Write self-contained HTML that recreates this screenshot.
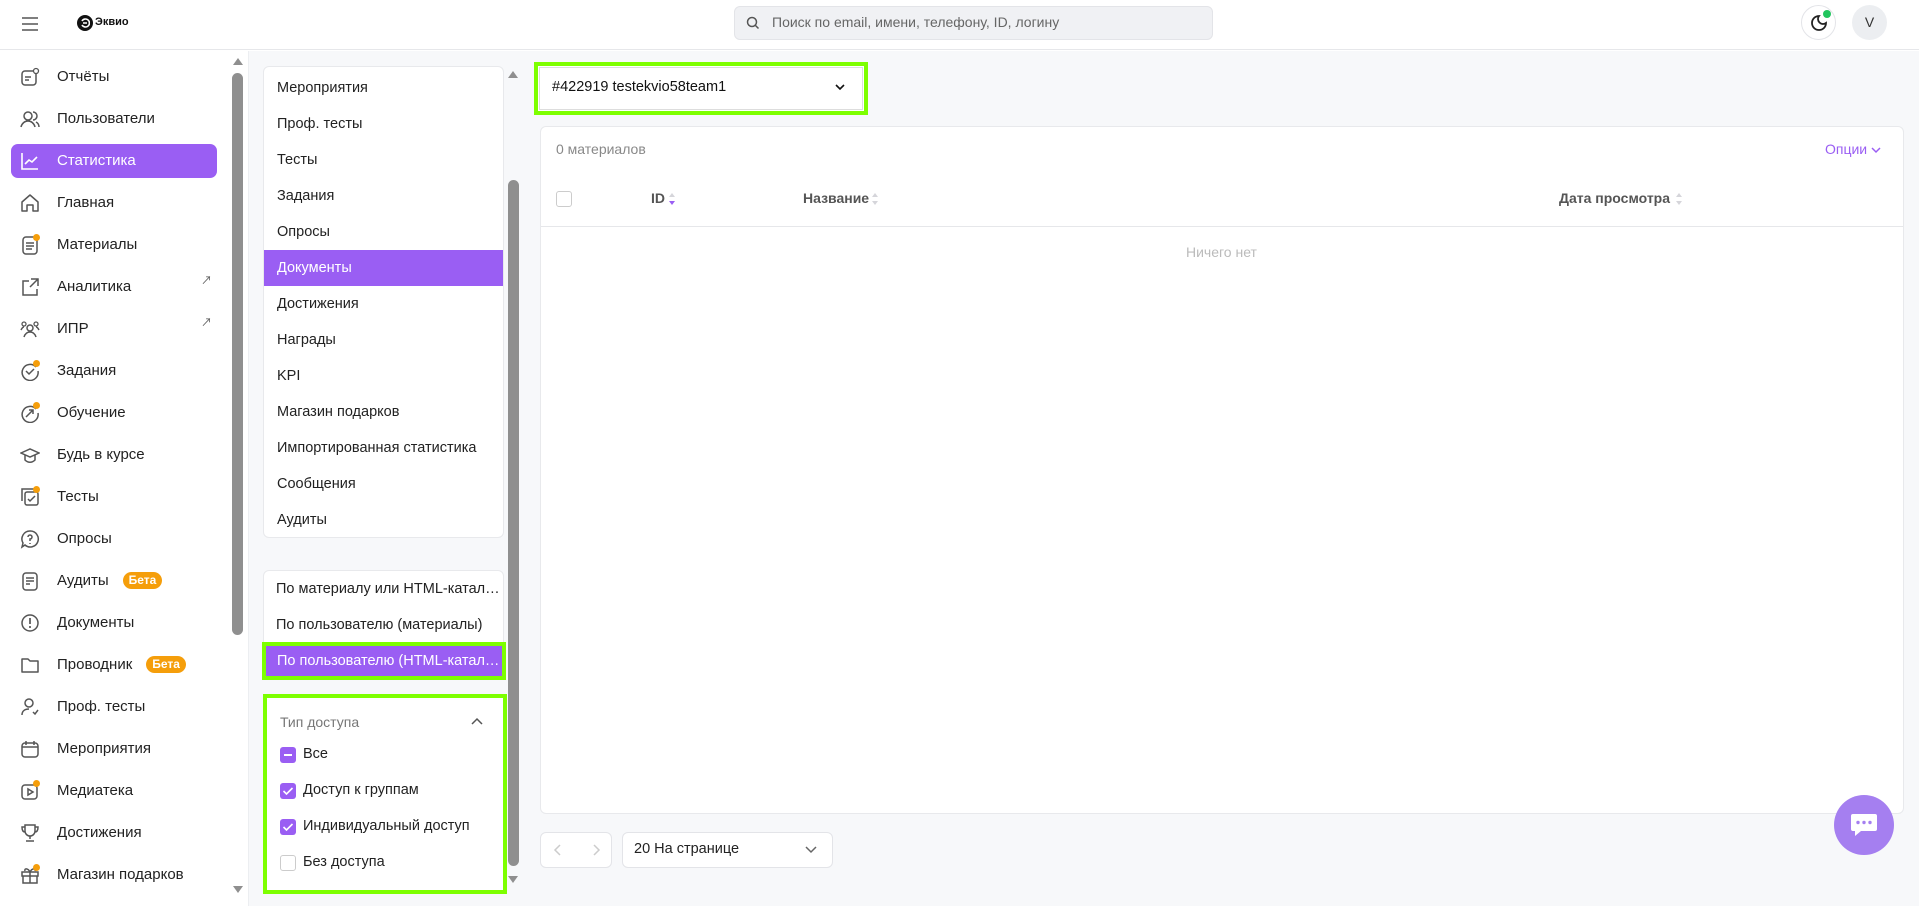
<!DOCTYPE html>
<html><head><meta charset="utf-8"><style>
*{box-sizing:border-box;margin:0;padding:0}
body{width:1919px;height:906px;overflow:hidden;background:#fff;font-family:"Liberation Sans","Noto Sans CJK SC",sans-serif;color:#222;position:relative}
.abs{position:absolute}
.hdr{left:0;top:0;width:1919px;height:50px;border-bottom:1px solid #e6e7ea;background:#fff}
.nav{left:0;top:50px;width:230px;height:856px}
.ni{position:absolute;left:11px;width:206px;height:34px;border-radius:7px;font-size:15px;line-height:34px;padding-left:46px;color:#222}
.ni svg{position:absolute;left:9px;top:7px}
.ni.act{background:#9a5ef3;color:#fff}
.beta{display:inline-block;background:#f59e0b;color:#fff;font-size:12px;font-weight:bold;line-height:17px;padding:0 6px;border-radius:9px;margin-left:14px;vertical-align:1px}
.dot{position:absolute;width:7px;height:7px;border-radius:50%;background:#f59e0b}
.sb{background:#8f8f8f;border-radius:6px}
.card{background:#fff;border:1px solid #e8e9ec;border-radius:6px}
.si{position:absolute;left:0;width:239px;height:36px;line-height:36px;padding-left:13px;font-size:14.5px;color:#222;white-space:nowrap;overflow:hidden}
.si.act{background:#9a5ef3;color:#fff}
.cb{position:absolute;width:16px;height:16px;border-radius:3px;background:#9a5ef3}
.cl{position:absolute;left:303px;font-size:14.5px;color:#222}
.th{position:absolute;top:190px;font-size:14px;color:#555;font-weight:bold}
</style></head><body>
<div class="abs hdr">
 <svg class="abs" style="left:20px;top:16px" width="20" height="16"><path d="M2 2h16M2 8h16M2 14h16" stroke="#555" stroke-width="1.6"/></svg>
 <div class="abs" style="left:77px;top:15px;width:16px;height:16px;border-radius:50%;background:#111"></div>
 <svg class="abs" style="left:80px;top:18px" width="10" height="10"><path d="M2 3a4 4 0 1 1 0 4M3 5h4" stroke="#fff" stroke-width="1.6" fill="none"/></svg>
 <div class="abs" style="left:95px;top:16px;font-size:11px;font-weight:bold;color:#111">Эквио</div>
 <div class="abs" style="left:734px;top:6px;width:479px;height:34px;background:#f0f1f4;border:1px solid #e3e4e8;border-radius:6px"></div>
 <svg class="abs" style="left:746px;top:16px" width="14" height="14"><circle cx="6" cy="6" r="4.5" stroke="#555" stroke-width="1.5" fill="none"/><path d="M9.5 9.5l3 3" stroke="#555" stroke-width="1.5"/></svg>
 <div class="abs" style="left:772px;top:14px;font-size:14px;color:#666">Поиск по email, имени, телефону, ID, логину</div>
 <div class="abs" style="left:1801px;top:5px;width:35px;height:35px;border-radius:50%;border:1px solid #e3e4e8;background:#fff"></div>
 <svg class="abs" style="left:1809px;top:13px" width="20" height="20"><path d="M10 3a7 7 0 1 0 7 7a5 5 0 0 1-7-7z" stroke="#222" stroke-width="1.8" fill="none"/></svg>
 <div class="abs" style="left:1823px;top:10px;width:8px;height:8px;border-radius:50%;background:#22c55e"></div>
 <div class="abs" style="left:1852px;top:5px;width:35px;height:35px;border-radius:50%;background:#eceef1;text-align:center;line-height:35px;font-size:14px;color:#333">V</div>
</div>

<div class="abs nav">
 <div class="ni" style="top:10px"><svg width="20" height="20"><rect x="2" y="4" width="14" height="14" rx="3" stroke="#555" stroke-width="1.5" fill="none"/><path d="M5 10h6M5 13h4" stroke="#555" stroke-width="1.5"/><circle cx="16" cy="4" r="2.5" stroke="#555" stroke-width="1.3" fill="#fff"/></svg>Отчёты</div>
 <div class="ni" style="top:52px"><svg width="20" height="20"><circle cx="8" cy="7" r="4" stroke="#555" stroke-width="1.5" fill="none"/><path d="M1 18c1-4 4-6 7-6s6 2 7 6M13 3a4 4 0 0 1 0 8M16 13c2 1 3 3 3 5" stroke="#555" stroke-width="1.5" fill="none"/></svg>Пользователи</div>
 <div class="ni act" style="top:94px"><svg width="20" height="20"><path d="M2 2v16h16M5 13l4-4 3 2 5-5" stroke="#fff" stroke-width="1.6" fill="none"/></svg>Статистика</div>
 <div class="ni" style="top:136px"><svg width="20" height="20"><path d="M2 18V9l8-7 8 7v9h-5v-6h-6v6z" stroke="#555" stroke-width="1.5" fill="none" stroke-linejoin="round"/></svg>Главная</div>
 <div class="ni" style="top:178px"><svg width="20" height="20"><rect x="3" y="2" width="14" height="17" rx="3" stroke="#555" stroke-width="1.5" fill="none"/><path d="M6 8h8M6 11h8M6 14h6" stroke="#555" stroke-width="1.5"/></svg><span class="dot" style="left:22px;top:6px"></span>Материалы</div>
 <div class="ni" style="top:220px"><svg width="20" height="20"><path d="M9 4H3v14h14v-6M11 2h7v7M18 2l-8 8" stroke="#555" stroke-width="1.5" fill="none"/></svg>Аналитика<span class="abs" style="left:190px;top:-6px;font-size:11px;color:#555">↗</span></div>
 <div class="ni" style="top:262px"><svg width="20" height="20"><circle cx="10" cy="9" r="3" stroke="#555" stroke-width="1.5" fill="none"/><circle cx="4" cy="5" r="2" stroke="#555" stroke-width="1.3" fill="none"/><circle cx="16" cy="5" r="2" stroke="#555" stroke-width="1.3" fill="none"/><path d="M4 18c1-3 3-5 6-5s5 2 6 5M1 11c1-2 2-3 3-3M19 11c-1-2-2-3-3-3" stroke="#555" stroke-width="1.5" fill="none"/></svg>ИПР<span class="abs" style="left:190px;top:-6px;font-size:11px;color:#555">↗</span></div>
 <div class="ni" style="top:304px"><svg width="20" height="20"><path d="M16 6A8 8 0 1 0 18 10" stroke="#555" stroke-width="1.5" fill="none"/><path d="M6 10l3 3 5-5" stroke="#555" stroke-width="1.5" fill="none"/></svg><span class="dot" style="left:22px;top:6px"></span>Задания</div>
 <div class="ni" style="top:346px"><svg width="20" height="20"><path d="M16 6A8 8 0 1 0 18 10" stroke="#555" stroke-width="1.5" fill="none"/><path d="M6 14l7-7M9 7h4v4" stroke="#555" stroke-width="1.5" fill="none"/></svg><span class="dot" style="left:22px;top:6px"></span>Обучение</div>
 <div class="ni" style="top:388px"><svg width="20" height="20"><path d="M1 8l9-4 9 4-9 4zM5 10v5c3 3 7 3 10 0v-5" stroke="#555" stroke-width="1.5" fill="none"/></svg>Будь в курсе</div>
 <div class="ni" style="top:430px"><svg width="20" height="20"><rect x="5" y="5" width="13" height="13" rx="2" stroke="#555" stroke-width="1.5" fill="none"/><path d="M2 14V2h12M8 12l2 2 5-5" stroke="#555" stroke-width="1.5" fill="none"/></svg><span class="dot" style="left:22px;top:6px"></span>Тесты</div>
 <div class="ni" style="top:472px"><svg width="20" height="20"><path d="M10 2a8 8 0 1 1-5 14l-3 2 1-4A8 8 0 0 1 10 2z" stroke="#555" stroke-width="1.5" fill="none"/><path d="M8 8a2 2 0 1 1 2 2v2M10 14v1" stroke="#555" stroke-width="1.5" fill="none"/></svg>Опросы</div>
 <div class="ni" style="top:514px"><svg width="20" height="20"><rect x="3" y="2" width="14" height="17" rx="3" stroke="#555" stroke-width="1.5" fill="none"/><path d="M6 7h8M6 10h8M6 13h4" stroke="#555" stroke-width="1.5"/></svg>Аудиты<span class="beta">Бета</span></div>
 <div class="ni" style="top:556px"><svg width="20" height="20"><circle cx="10" cy="10" r="8" stroke="#555" stroke-width="1.5" fill="none"/><path d="M10 5v6M10 13v2" stroke="#555" stroke-width="1.7"/></svg>Документы</div>
 <div class="ni" style="top:598px"><svg width="20" height="20"><path d="M2 4h6l2 2h8v11H2z" stroke="#555" stroke-width="1.5" fill="none" stroke-linejoin="round"/></svg>Проводник<span class="beta">Бета</span></div>
 <div class="ni" style="top:640px"><svg width="20" height="20"><circle cx="9" cy="6" r="4" stroke="#555" stroke-width="1.5" fill="none"/><path d="M2 18c0-4 3-6 7-6M13 15l2 2 3-4" stroke="#555" stroke-width="1.5" fill="none"/></svg>Проф. тесты</div>
 <div class="ni" style="top:682px"><svg width="20" height="20"><rect x="2" y="4" width="16" height="14" rx="3" stroke="#555" stroke-width="1.5" fill="none"/><path d="M2 8h16M6 2v4M14 2v4" stroke="#555" stroke-width="1.5"/></svg>Мероприятия</div>
 <div class="ni" style="top:724px"><svg width="20" height="20"><rect x="2" y="4" width="15" height="14" rx="3" stroke="#555" stroke-width="1.5" fill="none"/><path d="M8 8v6l5-3z" stroke="#555" stroke-width="1.5" fill="none"/></svg><span class="dot" style="left:22px;top:6px"></span>Медиатека</div>
 <div class="ni" style="top:766px"><svg width="20" height="20"><path d="M5 2h10v6a5 5 0 0 1-10 0zM5 4H2c0 3 1 5 3 5M15 4h3c0 3-1 5-3 5M10 13v3M6 18h8" stroke="#555" stroke-width="1.5" fill="none"/></svg>Достижения</div>
 <div class="ni" style="top:808px"><svg width="20" height="20"><rect x="2" y="7" width="16" height="4" stroke="#555" stroke-width="1.5" fill="none"/><path d="M3 11v7h14v-7M10 7v11M10 7c-2-4-6-4-5-1M10 7c2-4 6-4 5-1" stroke="#555" stroke-width="1.5" fill="none"/></svg><span class="dot" style="left:22px;top:6px"></span>Магазин подарков</div>
</div>
<!-- left scrollbar -->
<svg class="abs" style="left:231px;top:55px" width="14" height="12"><path d="M2 10l5-7 5 7z" fill="#8f8f8f"/></svg>
<div class="abs sb" style="left:232px;top:73px;width:11px;height:562px"></div>
<svg class="abs" style="left:231px;top:884px" width="14" height="12"><path d="M2 2l5 7 5-7z" fill="#8f8f8f"/></svg>

<!-- grey content bg -->
<div class="abs" style="left:248px;top:51px;width:1671px;height:855px;background:#f7f8fa;border-left:1px solid #eceef1"></div>

<!-- submenu -->
<div class="abs card" style="left:263px;top:66px;width:241px;height:472px;overflow:hidden">
 <div class="si" style="top:3px">Мероприятия</div>
 <div class="si" style="top:39px">Проф. тесты</div>
 <div class="si" style="top:75px">Тесты</div>
 <div class="si" style="top:111px">Задания</div>
 <div class="si" style="top:147px">Опросы</div>
 <div class="si act" style="top:183px">Документы</div>
 <div class="si" style="top:219px">Достижения</div>
 <div class="si" style="top:255px">Награды</div>
 <div class="si" style="top:291px">KPI</div>
 <div class="si" style="top:327px">Магазин подарков</div>
 <div class="si" style="top:363px">Импортированная статистика</div>
 <div class="si" style="top:399px">Сообщения</div>
 <div class="si" style="top:435px">Аудиты</div>
</div>
<div class="abs card" style="left:263px;top:570px;width:241px;height:110px"></div>
<div class="abs" style="left:263px;top:571px;width:239px;height:36px;line-height:36px;padding-left:13px;font-size:14.5px;white-space:nowrap;overflow:hidden">По материалу или HTML-катал…</div>
<div class="abs" style="left:263px;top:607px;width:239px;height:36px;line-height:36px;padding-left:13px;font-size:14.5px">По пользователю (материалы)</div>
<div class="abs" style="left:262px;top:642px;width:244px;height:38px;border:4px solid #7dff00;background:#9a5ef3;color:#fff;font-size:14.5px;line-height:30px;padding-left:11px;white-space:nowrap;overflow:hidden">По пользователю (HTML-катал…</div>

<div class="abs" style="left:263px;top:694px;width:244px;height:200px;border:4px solid #7dff00;background:#fff"></div>
<div class="abs" style="left:280px;top:714px;font-size:14px;color:#777">Тип доступа</div>
<svg class="abs" style="left:470px;top:716px" width="14" height="10"><path d="M2 8l5-5 5 5" stroke="#555" stroke-width="1.5" fill="none"/></svg>
<div class="cb" style="left:280px;top:747px"></div><div class="abs" style="left:284px;top:754px;width:8px;height:2px;background:#fff"></div>
<div class="cl" style="top:746px">Все</div>
<div class="cb" style="left:280px;top:783px"></div><svg class="abs" style="left:280px;top:783px" width="16" height="16"><path d="M3.5 8l3 3 6-6" stroke="#fff" stroke-width="1.6" fill="none"/></svg>
<div class="cl" style="top:782px">Доступ к группам</div>
<div class="cb" style="left:280px;top:819px"></div><svg class="abs" style="left:280px;top:819px" width="16" height="16"><path d="M3.5 8l3 3 6-6" stroke="#fff" stroke-width="1.6" fill="none"/></svg>
<div class="cl" style="top:818px">Индивидуальный доступ</div>
<div class="cb" style="left:280px;top:855px;background:#fff;border:1px solid #ccc"></div>
<div class="cl" style="top:854px">Без доступа</div>

<!-- sub scrollbar -->
<svg class="abs" style="left:506px;top:68px" width="14" height="12"><path d="M2 10l5-7 5 7z" fill="#8f8f8f"/></svg>
<div class="abs sb" style="left:508px;top:180px;width:11px;height:686px"></div>
<svg class="abs" style="left:506px;top:874px" width="14" height="12"><path d="M2 2l5 7 5-7z" fill="#8f8f8f"/></svg>

<!-- dropdown -->
<div class="abs" style="left:534px;top:62px;width:334px;height:53px;border:4px solid #7dff00;background:#fff"></div>
<div class="abs" style="left:539px;top:67px;width:324px;height:43px;border:1px solid #ddd"></div>
<div class="abs" style="left:552px;top:79px;font-size:14.5px;color:#111">#422919 testekvio58team1</div>
<svg class="abs" style="left:834px;top:82px" width="12" height="10"><path d="M2 3l4 4 4-4" stroke="#111" stroke-width="1.6" fill="none"/></svg>

<!-- table -->
<div class="abs card" style="left:540px;top:126px;width:1364px;height:688px"></div>
<div class="abs" style="left:556px;top:141px;font-size:14px;color:#888">0 материалов</div>
<div class="abs" style="left:1825px;top:141px;font-size:14px;color:#9a5ef3">Опции</div>
<svg class="abs" style="left:1870px;top:145px" width="12" height="10"><path d="M2 3l4 4 4-4" stroke="#9a5ef3" stroke-width="1.5" fill="none"/></svg>
<div class="abs" style="left:556px;top:191px;width:16px;height:16px;border:1px solid #ccc;border-radius:3px;background:#fff"></div>
<div class="th" style="left:651px">ID</div>
<svg class="abs" style="left:668px;top:192px" width="8" height="14"><path d="M1 5l3-4 3 4z" fill="#d5d5da"/><path d="M1 9l3 4 3-4z" fill="#9a5ef3"/></svg>
<div class="th" style="left:803px">Название</div>
<svg class="abs" style="left:871px;top:192px" width="8" height="14"><path d="M1 5l3-4 3 4zM1 9l3 4 3-4z" fill="#d5d5da"/></svg>
<div class="th" style="left:1559px">Дата просмотра</div>
<svg class="abs" style="left:1675px;top:192px" width="8" height="14"><path d="M1 5l3-4 3 4zM1 9l3 4 3-4z" fill="#d5d5da"/></svg>
<div class="abs" style="left:541px;top:226px;width:1362px;height:1px;background:#e6e7ea"></div>
<div class="abs" style="left:1186px;top:244px;font-size:14px;color:#bbb">Ничего нет</div>

<!-- pagination -->
<div class="abs" style="left:540px;top:832px;width:72px;height:36px;border:1px solid #e3e4e8;border-radius:6px;background:#fff"></div>
<svg class="abs" style="left:552px;top:843px" width="50" height="14"><path d="M8 2l-5 5 5 5M42 2l5 5-5 5" stroke="#ccc" stroke-width="1.5" fill="none"/></svg>
<div class="abs" style="left:622px;top:832px;width:211px;height:36px;border:1px solid #e3e4e8;border-radius:6px;background:#fff"></div>
<div class="abs" style="left:634px;top:841px;font-size:14.5px;color:#222">20 На странице</div>
<svg class="abs" style="left:804px;top:845px" width="14" height="10"><path d="M2 2l5 5 5-5" stroke="#666" stroke-width="1.5" fill="none"/></svg>

<!-- chat -->
<div class="abs" style="left:1834px;top:795px;width:60px;height:60px;border-radius:50%;background:#a57ff0"></div>
<svg class="abs" style="left:1849px;top:811px" width="30" height="28"><path d="M4 3h22a2 2 0 0 1 2 2v13a2 2 0 0 1-2 2H12l-6 5v-5H4a2 2 0 0 1-2-2V5a2 2 0 0 1 2-2z" fill="#fff"/><circle cx="9" cy="11.5" r="1.7" fill="#a57ff0"/><circle cx="15" cy="11.5" r="1.7" fill="#a57ff0"/><circle cx="21" cy="11.5" r="1.7" fill="#a57ff0"/></svg>
</body></html>
